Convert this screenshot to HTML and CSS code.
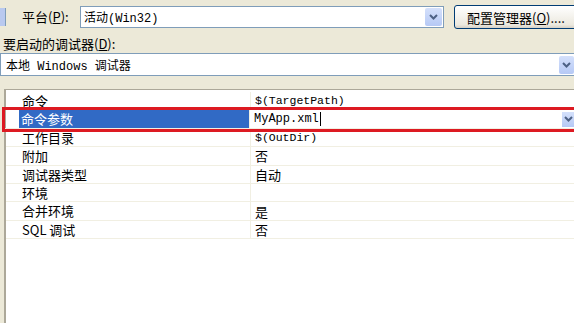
FILE: index.html
```html
<!DOCTYPE html>
<html lang="zh-CN">
<head>
<meta charset="UTF-8">
<title>属性页 - 调试</title>
<link rel="stylesheet" href="styles.css">
</head>
<body>
<div class="top">
  <span class="stub"></span>
  <label class="lbl">平台(<u>P</u>):</label>
  <div class="select plat">
    <span class="val">活动(Win32)</span>
    <span class="arrow"><svg width="9" height="6" viewBox="0 0 9 6"><path d="M1 1 L4.5 4.5 L8 1" fill="none" stroke="#4d6185" stroke-width="2"/></svg></span>
  </div>
  <button class="btn">配置管理器(<u>O</u>)....</button>
</div>
<div class="lbl dbg">要启动的调试器(<u>D</u>):</div>
<div class="select wide">
  <span class="val">本地 Windows 调试器</span>
  <span class="arrow"><svg width="9" height="6" viewBox="0 0 9 6"><path d="M1 1 L4.5 4.5 L8 1" fill="none" stroke="#4d6185" stroke-width="2"/></svg></span>
</div>
<div class="grid">
  <div class="row"><span class="gut"></span><span class="name">命令</span><span class="v">$(TargetPath)</span></div>
  <div class="row sel"><span class="gut"></span><span class="name">命令参数</span><span class="v">MyApp.xml<i class="caret"></i><span class="arrow"><svg width="9" height="6" viewBox="0 0 9 6"><path d="M1 1 L4.5 4.5 L8 1" fill="none" stroke="#4d6185" stroke-width="2"/></svg></span></span></div>
  <div class="row"><span class="gut"></span><span class="name">工作目录</span><span class="v">$(OutDir)</span></div>
  <div class="row"><span class="gut"></span><span class="name">附加</span><span class="v cjk">否</span></div>
  <div class="row"><span class="gut"></span><span class="name">调试器类型</span><span class="v cjk">自动</span></div>
  <div class="row"><span class="gut"></span><span class="name">环境</span><span class="v"></span></div>
  <div class="row"><span class="gut"></span><span class="name">合并环境</span><span class="v cjk">是</span></div>
  <div class="row"><span class="gut"></span><span class="name">SQL 调试</span><span class="v cjk">否</span></div>
  <div class="rest"></div>
</div>
</body>
</html>
```

FILE: styles.css
```css
body { margin: 0; background: #ece9d8; font-family: "Noto Sans CJK SC", "Liberation Sans", sans-serif; font-size: 13px; color: #000; height: 323px; overflow: hidden; display: flex; flex-direction: column; }
u { text-decoration: underline; }
.top { display: flex; align-items: center; height: 24px; margin-top: 5px; white-space: nowrap; }
.stub { width: 5px; height: 18px; background: #b9c9ef; border-right: 1px solid #7f9db9; flex: none; }
.lbl { margin-left: 16px; width: 58px; line-height: 16px; white-space: nowrap; flex: none; }
.select { background: #fff; border: 1px solid #7f9db9; display: flex; align-items: center; box-sizing: border-box; font-family: "Liberation Mono", "Noto Sans CJK SC", monospace; font-size: 12px; flex: none; }
.select .val { flex: 1; padding-left: 3px; white-space: nowrap; }
.plat { width: 364px; height: 22px; }
.arrow { width: 17px; height: 18px; margin-right: 1px; background: linear-gradient(#d4e0fb, #b6c9f5); border-radius: 2px; display: flex; align-items: center; justify-content: center; flex: none; }
.btn { margin-left: 10px; height: 24px; width: 130px; flex: none; border: 1px solid #003c74; border-radius: 3px; background: linear-gradient(#fff, #ece9df 85%, #d6d0c5); font-family: "Noto Sans CJK SC", sans-serif; font-size: 13px; text-align: left; padding: 0 0 0 12px; white-space: nowrap; overflow: hidden; }
.dbg { margin: 7px 0 0 3px; height: 16px; width: auto; }
.wide { width: 574px; height: 23px; margin-top: 1px; border-right: none; }
.wide .val { padding-left: 5px; }
.wide .arrow { margin-right: 0; width: 15px; }
.grid { margin: 13px 0 0 4px; flex: 1; background: #fff; border-left: 2px solid #aca899; border-top: 1px solid #aca899; display: flex; flex-direction: column; padding-top: 2px; }
.row { display: grid; grid-template-columns: 14px 230px 1fr; height: 18.4px; align-items: stretch; border-bottom: 1px solid #f1efe2; box-sizing: border-box; }
.name { padding-left: 2px; line-height: 17px; white-space: nowrap; }
.v { border-left: 1px solid #f1efe2; padding-left: 4px; line-height: 17px; font-family: "Liberation Mono", "Noto Sans CJK SC", monospace; font-size: 11.5px; display: flex; align-items: center; }
.v.cjk { font-family: "Noto Sans CJK SC", sans-serif; font-size: 13px; }
.sel { outline: 3px solid #dd1a22; outline-offset: 0; position: relative; z-index: 1; margin-left: -1px; }
.sel .name { background: #316ac5; color: #fff; }
.sel .v { font-size: 12px; }
.sel .arrow { margin-left: auto; height: 15px; width: 12px; border-radius: 0; margin-right: 0; }
.caret { display: inline-block; width: 1px; height: 14px; background: #000; margin-left: 1px; }
.rest { flex: 1; }
```
